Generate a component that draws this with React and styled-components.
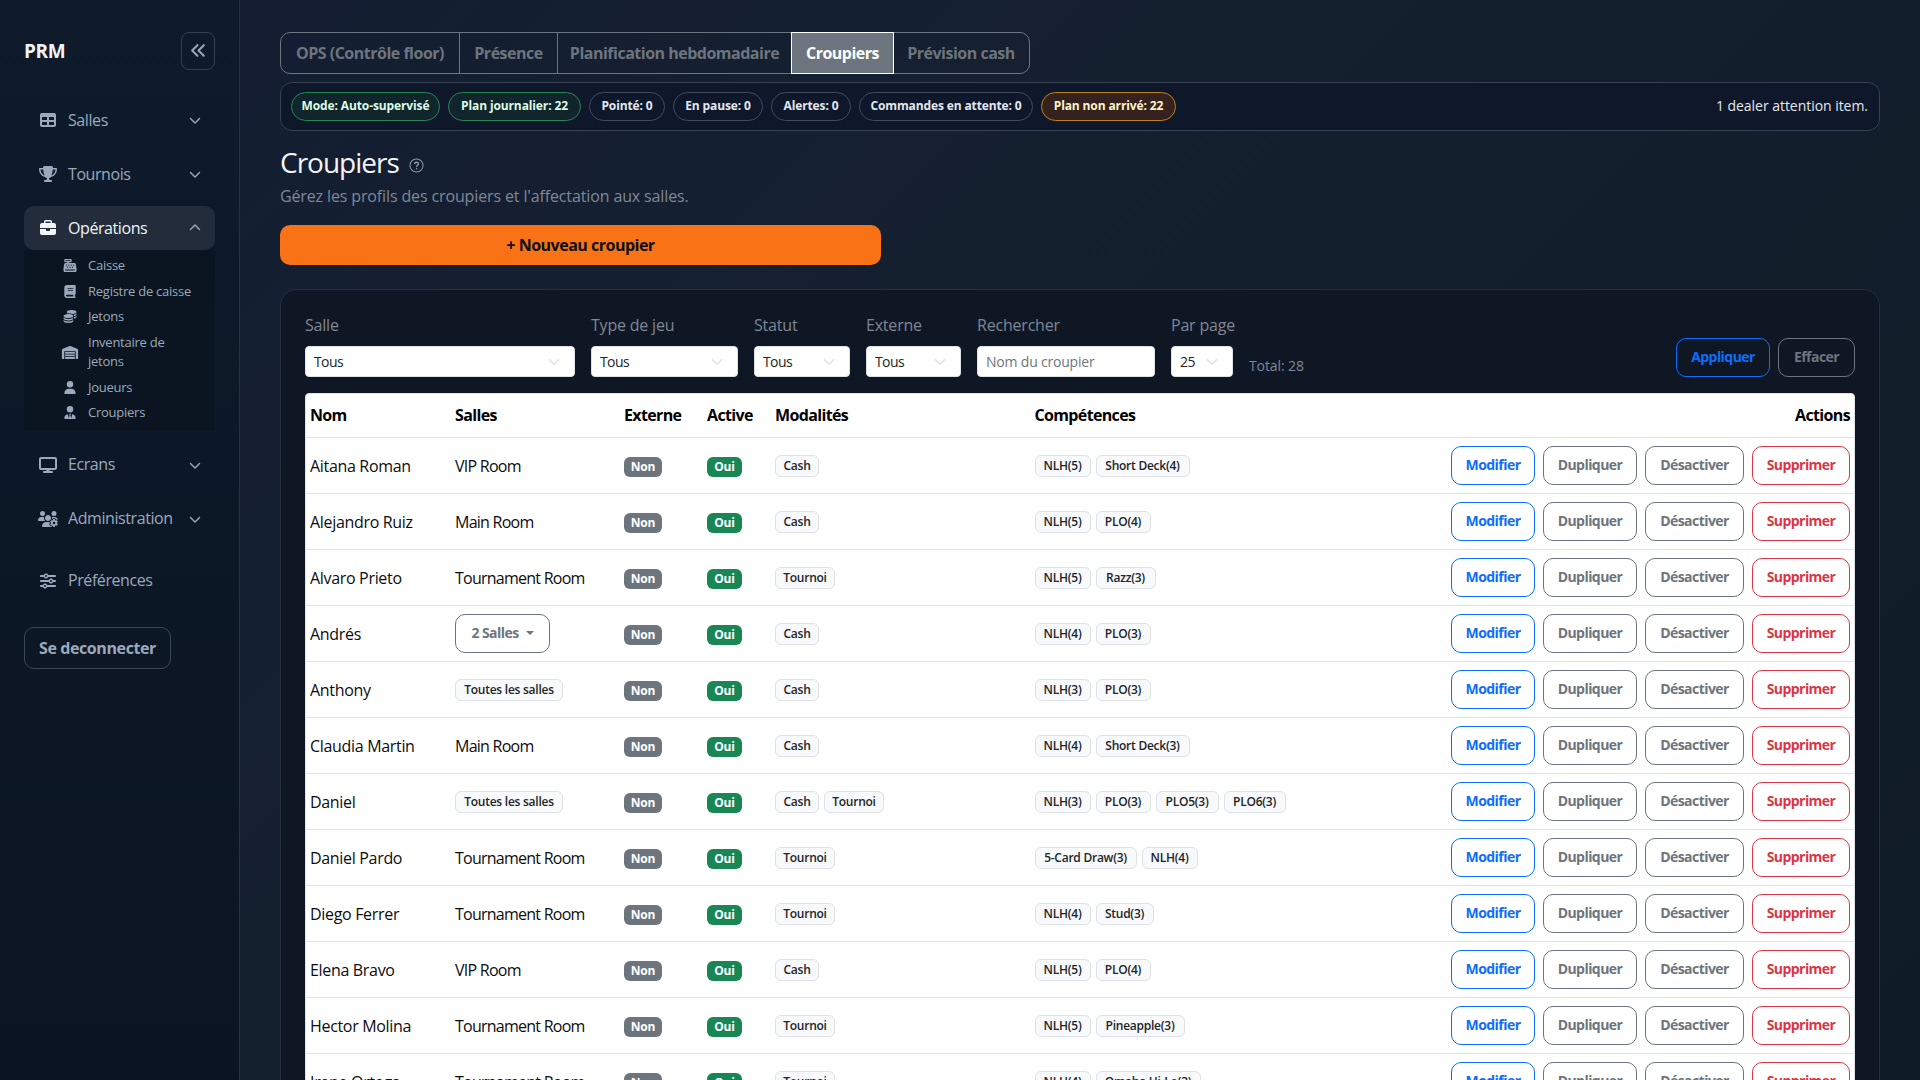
import React from 'react';
import styled, { createGlobalStyle } from 'styled-components';
import {
  FaTable, FaTrophy, FaBriefcase, FaCashRegister, FaBook, FaCoins, FaWarehouse, FaUser,
  FaUserTie, FaDisplay, FaUsersGear, FaSliders, FaAnglesLeft, FaChevronDown, FaChevronUp,
} from 'react-icons/fa6';

const menu = [
  { label: 'Salles', icon: FaTable },
  { label: 'Tournois', icon: FaTrophy },
  {
    label: 'Opérations',
    icon: FaBriefcase,
    open: true,
    items: [
      { label: 'Caisse', icon: FaCashRegister },
      { label: 'Registre de caisse', icon: FaBook },
      { label: 'Jetons', icon: FaCoins },
      { label: 'Inventaire de jetons', icon: FaWarehouse },
      { label: 'Joueurs', icon: FaUser },
      { label: 'Croupiers', icon: FaUserTie },
    ],
  },
  { label: 'Ecrans', icon: FaDisplay },
  { label: 'Administration', icon: FaUsersGear },
];

const tabs = [
  { label: 'OPS (Contrôle floor)', width: 179 },
  { label: 'Présence', width: 98 },
  { label: 'Planification hebdomadaire', width: 234 },
  { label: 'Croupiers', width: 103, active: true },
  { label: 'Prévision cash', width: 134 },
];

const pills = [
  { label: 'Mode: Auto-supervisé', width: 149, tone: 'ok' },
  { label: 'Plan journalier: 22', width: 133, tone: 'ok' },
  { label: 'Pointé: 0', width: 76 },
  { label: 'En pause: 0', width: 90 },
  { label: 'Alertes: 0', width: 80 },
  { label: 'Commandes en attente: 0', width: 174 },
  { label: 'Plan non arrivé: 22', width: 135, tone: 'warn' },
];

const filters = [
  { label: 'Salle', value: 'Tous', width: 270 },
  { label: 'Type de jeu', value: 'Tous', width: 147 },
  { label: 'Statut', value: 'Tous', width: 96 },
  { label: 'Externe', value: 'Tous', width: 95 },
  { label: 'Rechercher', placeholder: 'Nom du croupier', width: 178 },
  { label: 'Par page', value: '25', width: 62 },
];

const tagWidths = {
  Cash: 44,
  Tournoi: 60,
  'Short Deck(4)': 94,
  'Short Deck(3)': 94,
  'PLO(3)': 55,
  'PLO(4)': 55,
  'PLO5(3)': 63,
  'PLO6(3)': 62,
  'Razz(3)': 60,
  '5-Card Draw(3)': 102,
  'Stud(3)': 58,
  'Pineapple(3)': 89,
  'Omaha Hi-Lo(3)': 105,
};

const dealers = [
  { name: 'Aitana Roman', room: 'VIP Room', modes: ['Cash'], skills: ['NLH(5)', 'Short Deck(4)'] },
  { name: 'Alejandro Ruiz', room: 'Main Room', modes: ['Cash'], skills: ['NLH(5)', 'PLO(4)'] },
  { name: 'Alvaro Prieto', room: 'Tournament Room', modes: ['Tournoi'], skills: ['NLH(5)', 'Razz(3)'] },
  { name: 'Andrés', count: 2, modes: ['Cash'], skills: ['NLH(4)', 'PLO(3)'] },
  { name: 'Anthony', all: true, modes: ['Cash'], skills: ['NLH(3)', 'PLO(3)'] },
  { name: 'Claudia Martin', room: 'Main Room', modes: ['Cash'], skills: ['NLH(4)', 'Short Deck(3)'] },
  { name: 'Daniel', all: true, modes: ['Cash', 'Tournoi'], skills: ['NLH(3)', 'PLO(3)', 'PLO5(3)', 'PLO6(3)'] },
  { name: 'Daniel Pardo', room: 'Tournament Room', modes: ['Tournoi'], skills: ['5-Card Draw(3)', 'NLH(4)'] },
  { name: 'Diego Ferrer', room: 'Tournament Room', modes: ['Tournoi'], skills: ['NLH(4)', 'Stud(3)'] },
  { name: 'Elena Bravo', room: 'VIP Room', modes: ['Cash'], skills: ['NLH(5)', 'PLO(4)'] },
  { name: 'Hector Molina', room: 'Tournament Room', modes: ['Tournoi'], skills: ['NLH(5)', 'Pineapple(3)'] },
  { name: 'Irene Ortega', room: 'Tournament Room', modes: ['Tournoi'], skills: ['NLH(4)', 'Omaha Hi-Lo(3)'] },
];

const App = () => (
  <Page>
    <GlobalStyle />
    <Sidebar>
      <Brand>
        PRM
        <Collapse><FaAnglesLeft /></Collapse>
      </Brand>
      {menu.map(({ label, icon: Icon, open, items }) => (
        <React.Fragment key={label}>
          <MenuItem $open={open}>
            <Icon />
            <span>{label}</span>
            {open ? <FaChevronUp /> : <FaChevronDown />}
          </MenuItem>
          {items && (
            <SubMenu>
              {items.map(({ label: text, icon: SubIcon }) => (
                <SubItem key={text}>
                  <SubIcon />
                  <span>{text}</span>
                </SubItem>
              ))}
            </SubMenu>
          )}
        </React.Fragment>
      ))}
      <Preferences>
        <FaSliders />
        <span>Préférences</span>
      </Preferences>
      <Logout>Se deconnecter</Logout>
    </Sidebar>

    <Main>
      <Tabs>
        {tabs.map((tab) => (
          <Tab key={tab.label} $width={tab.width} $active={tab.active}>{tab.label}</Tab>
        ))}
      </Tabs>
      <StatusBar>
        {pills.map((pill) => (
          <Pill key={pill.label} $width={pill.width} $tone={pill.tone}>{pill.label}</Pill>
        ))}
        <Attention>1 dealer attention item.</Attention>
      </StatusBar>

      <Title>
        Croupiers
        <HelpIcon />
      </Title>
      <Subtitle>Gérez les profils des croupiers et l'affectation aux salles.</Subtitle>
      <NewButton>+ Nouveau croupier</NewButton>

      <Card>
        <Filters>
          {filters.map((filter) => (
            <Field key={filter.label} $width={filter.width}>
              <label>{filter.label}</label>
              <Control $placeholder={!!filter.placeholder}>
                {filter.value || filter.placeholder}
                {filter.value && <SelectArrow />}
              </Control>
            </Field>
          ))}
          <Total>Total: 28</Total>
          <FilterActions>
            <Button $color="#0d6efd" $width={94}>Appliquer</Button>
            <Button $color="#6c757d" $width={77}>Effacer</Button>
          </FilterActions>
        </Filters>

        <Table>
          <HeadRow>
            <span>Nom</span>
            <span>Salles</span>
            <span>Externe</span>
            <span>Active</span>
            <span>Modalités</span>
            <span>Compétences</span>
            <span>Actions</span>
          </HeadRow>
          {dealers.map((dealer) => (
            <Row key={dealer.name}>
              <Name>{dealer.name}</Name>
              {dealer.room && <Room>{dealer.room}</Room>}
              {dealer.all && <Tag $width={108}>Toutes les salles</Tag>}
              {dealer.count && (
                <Button $color="#6c757d" $width={95}>
                  {dealer.count} Salles <Caret />
                </Button>
              )}
              <Badge $width={38} $color="#6c757d">Non</Badge>
              <Badge $width={35} $color="#198754">Oui</Badge>
              <Tags>
                {dealer.modes.map((mode) => <Tag key={mode} $width={tagWidths[mode]}>{mode}</Tag>)}
              </Tags>
              <Tags>
                {dealer.skills.map((skill) => (
                  <Tag key={skill} $width={tagWidths[skill] || 56}>{skill}</Tag>
                ))}
              </Tags>
              <Actions>
                <Button $color="#0d6efd" $width={84}>Modifier</Button>
                <Button $color="#6c757d" $width={94}>Dupliquer</Button>
                <Button $color="#6c757d" $width={99}>Désactiver</Button>
                <Button $color="#dc3545" $width={98}>Supprimer</Button>
              </Actions>
            </Row>
          ))}
        </Table>
      </Card>
    </Main>
  </Page>
);

const HelpIcon = () => (
  <svg width="15" height="15" viewBox="0 0 16 16" fill="none" stroke="#8a96a6" strokeWidth="1.1">
    <circle cx="8" cy="8" r="7" />
    <path d="M6 6.5C6 5.2 6.8 4.5 8 4.5s2 .7 2 1.8C10 7.7 8.1 7.8 8.1 9.4" strokeWidth="1.5" />
    <path d="M8.1 10.5v1.5" strokeWidth="1.5" />
  </svg>
);

const SelectArrow = () => (
  <svg width="12" height="12" viewBox="0 0 16 16" fill="none" stroke="#dee2e6" strokeWidth="2" strokeLinecap="round" strokeLinejoin="round">
    <path d="m2 5 6 6 6-6" />
  </svg>
);

const GlobalStyle = createGlobalStyle`
  * {
    box-sizing: border-box;
  }

  body {
    margin: 0;
    overflow: hidden;
    font-family: "Trebuchet MS", "Open Sans", sans-serif;
    font-size: 16px;
    line-height: 24px;
    color: #e5e7eb;
  }
`;

const Page = styled.div`
  display: flex;
  height: 1080px;
  overflow: hidden;
  background: linear-gradient(135deg, #141d33 0%, #15202f 40%, #0f1b26 100%);
`;

const Sidebar = styled.nav`
  width: 240px;
  flex-shrink: 0;
  padding: 32px 24px;
  border-right: 1px solid #263241;
  background: linear-gradient(180deg, #0e1b2a 0%, #0b1423 100%);
  color: #9ba9bd;
`;

const Brand = styled.div`
  display: flex;
  align-items: center;
  justify-content: space-between;
  height: 38px;
  margin-bottom: 28px;
  font-size: 19px;
  font-weight: 700;
  letter-spacing: -0.4px;
  color: #f1f3f5;
`;

const Collapse = styled.div`
  display: flex;
  align-items: center;
  justify-content: center;
  width: 34px;
  height: 38px;
  padding-bottom: 2px;
  border: 1px solid #334050;
  border-radius: 8px;
  font-size: 17px;
  color: #94a3b8;
`;

const MenuItem = styled.div`
  display: flex;
  align-items: center;
  height: 44px;
  margin-bottom: ${({ $open }) => ($open ? 0 : 10)}px;
  padding: 0 14px;
  border-radius: 10px;
  background: ${({ $open }) => ($open ? '#222c3b' : 'transparent')};
  letter-spacing: -0.42px;
  color: ${({ $open }) => ($open ? '#f3f4f6' : 'inherit')};

  span {
    flex: 1;
    margin-left: 10px;
    padding-bottom: 1px;
    white-space: nowrap;
  }

  svg:first-child {
    width: 20px;
    height: 16px;
  }

  svg:last-child {
    flex-shrink: 0;
    width: 12px;
    height: 12px;
    color: #94a3b8;
  }
`;

const SubMenu = styled.div`
  padding: 3px 0 5px 36px;
  margin-bottom: 12px;
  background: #0a1521;
`;

const SubItem = styled.div`
  display: flex;
  align-items: center;
  padding: 3px 14px 3px 0;
  font-size: 13px;
  line-height: 19.5px;
  letter-spacing: -0.25px;

  svg {
    flex-shrink: 0;
    width: 20px;
    height: 13px;
    margin-right: 8px;
  }
`;

const Preferences = styled(MenuItem)`
  margin-top: 18px;
`;

const Logout = styled.div`
  display: flex;
  align-items: center;
  justify-content: center;
  width: 147px;
  height: 42px;
  margin-top: 24px;
  border: 1px solid #3b4857;
  border-radius: 10px;
  font-weight: 700;
  letter-spacing: -0.4px;
  white-space: nowrap;
`;

const Main = styled.main`
  flex: 1;
  padding: 32px 40px 0;
`;

const Tabs = styled.div`
  display: flex;
  width: 750px;
  height: 42px;
  border: 1px solid #6c757d;
  border-radius: 10px;
`;

const Tab = styled.div`
  display: flex;
  align-items: center;
  justify-content: center;
  flex: 0 0 ${({ $width }) => $width}px;
  margin: -1px 0;
  padding-bottom: 1px;
  border-right: 1px solid #6c757d;
  font-weight: 700;
  letter-spacing: -0.5px;
  white-space: nowrap;
  color: #6c757d;
  ${({ $active }) => $active && `
    margin-left: -1px;
    border: 1px solid #fff;
    background: #6c757d;
    color: #fff;
  `}

  &:last-child {
    border-right: 0;
  }
`;

const StatusBar = styled.div`
  display: flex;
  align-items: center;
  gap: 8px;
  height: 49px;
  margin-top: 8px;
  padding: 0 10px;
  border: 1px solid #364151;
  border-radius: 12px;
  background: #0f172a;
`;

const tones = {
  ok: 'border-color: #278654; background: #11252c; color: #dcfce7;',
  warn: 'border-color: #b9821d; background: #35221f; color: #fef3c7;',
};

const Pill = styled.div`
  display: flex;
  align-items: center;
  justify-content: center;
  width: ${({ $width }) => $width}px;
  height: 29px;
  padding-bottom: 1px;
  border: 1px solid #414c5f;
  border-radius: 15px;
  font-size: 12px;
  font-weight: 700;
  letter-spacing: -0.12px;
  white-space: nowrap;
  color: #e2e8f0;
  ${({ $tone }) => tones[$tone]}
`;

const Attention = styled.div`
  margin-left: auto;
  padding: 0 1px 1px 0;
  font-size: 14px;
  letter-spacing: -0.04px;
  color: #e5e7eb;
`;

const Title = styled.h1`
  display: flex;
  align-items: center;
  gap: 10px;
  height: 34px;
  margin: 14px 0 0;
  font-size: 28px;
  font-weight: 500;
  letter-spacing: -1px;
  color: #f3f4f6;

  svg {
    margin-top: 6px;
  }
`;

const Subtitle = styled.p`
  margin: 5px 0 17px;
  letter-spacing: -0.13px;
  color: #7e8998;
`;

const NewButton = styled.div`
  display: flex;
  align-items: center;
  justify-content: center;
  width: 601px;
  height: 40px;
  padding-bottom: 1px;
  border-radius: 10px;
  background: #f97316;
  font-weight: 700;
  letter-spacing: -0.5px;
  color: #0b0f19;
`;

const Card = styled.section`
  height: 830px;
  margin-top: 24px;
  padding: 23px 24px 0;
  border: 1px solid #223040;
  border-radius: 16px;
  background: #101724;
`;

const Filters = styled.div`
  display: flex;
  align-items: flex-end;
  gap: 16px;
  height: 64px;
  margin-bottom: 16px;
`;

const Field = styled.div`
  width: ${({ $width }) => $width}px;
  white-space: nowrap;
  letter-spacing: -0.2px;
  color: #7e8796;

  label {
    display: block;
    margin-bottom: 9px;
  }
`;

const Control = styled.div`
  display: flex;
  align-items: center;
  justify-content: space-between;
  height: 31px;
  padding: 0 14px 0 8px;
  border: 1px solid #dee2e6;
  border-radius: 4px;
  background: #fff;
  font-size: 14px;
  letter-spacing: ${({ $placeholder }) => ($placeholder ? -0.2 : -0.6)}px;
  color: ${({ $placeholder }) => ($placeholder ? '#6c757d' : '#212529')};
`;

const Total = styled.div`
  margin-bottom: -1px;
  font-size: 14px;
  letter-spacing: -0.1px;
  color: #7e8796;
`;

const FilterActions = styled.div`
  display: flex;
  gap: 8px;
  margin-left: auto;
`;

const Button = styled.div`
  display: flex;
  align-items: center;
  justify-content: center;
  gap: 7px;
  width: ${({ $width }) => $width}px;
  height: 39px;
  padding-bottom: 1px;
  border: 1px solid ${({ $color }) => $color};
  border-radius: 10px;
  font-size: 14px;
  font-weight: 700;
  letter-spacing: -0.55px;
  color: ${({ $color }) => $color};
`;

const Caret = styled.i`
  border-top: 4px solid currentColor;
  border-left: 4px solid transparent;
  border-right: 4px solid transparent;
`;

const Table = styled.div`
  border: 1px solid #dee2e6;
  border-radius: 4px;
  background: #fff;
  color: #000;
`;

const Row = styled.div`
  display: grid;
  grid-template-columns: 145px 169px 83px 68px 259.5px 1fr auto;
  align-items: center;
  height: 56px;
  padding: 0 4px;
  border-bottom: 1px solid #dee2e6;
  white-space: nowrap;
`;

const HeadRow = styled(Row)`
  height: 44px;
  padding-bottom: 1px;
  font-weight: 700;
  letter-spacing: -0.65px;
`;

const Name = styled.div`
  letter-spacing: -0.32px;
  color: #0b0d10;
`;

const Room = styled(Name)`
  letter-spacing: -0.75px;
`;

const Badge = styled.div`
  display: flex;
  align-items: center;
  justify-content: center;
  width: ${({ $width }) => $width}px;
  height: 20px;
  margin-top: 3px;
  border-radius: 6px;
  background: ${({ $color }) => $color};
  font-size: 12px;
  font-weight: 700;
  letter-spacing: -0.15px;
  color: #fff;
`;

const Tags = styled.div`
  display: flex;
  gap: 5px;
`;

const Tag = styled.div`
  display: flex;
  align-items: center;
  justify-content: center;
  width: ${({ $width }) => $width}px;
  height: 22px;
  border: 1px solid #dee2e6;
  border-radius: 6px;
  background: #f8f9fa;
  font-size: 12px;
  font-weight: 600;
  letter-spacing: -0.25px;
  color: #212529;
`;

const Actions = styled.div`
  display: flex;
  gap: 8px;
`;

export default App;
